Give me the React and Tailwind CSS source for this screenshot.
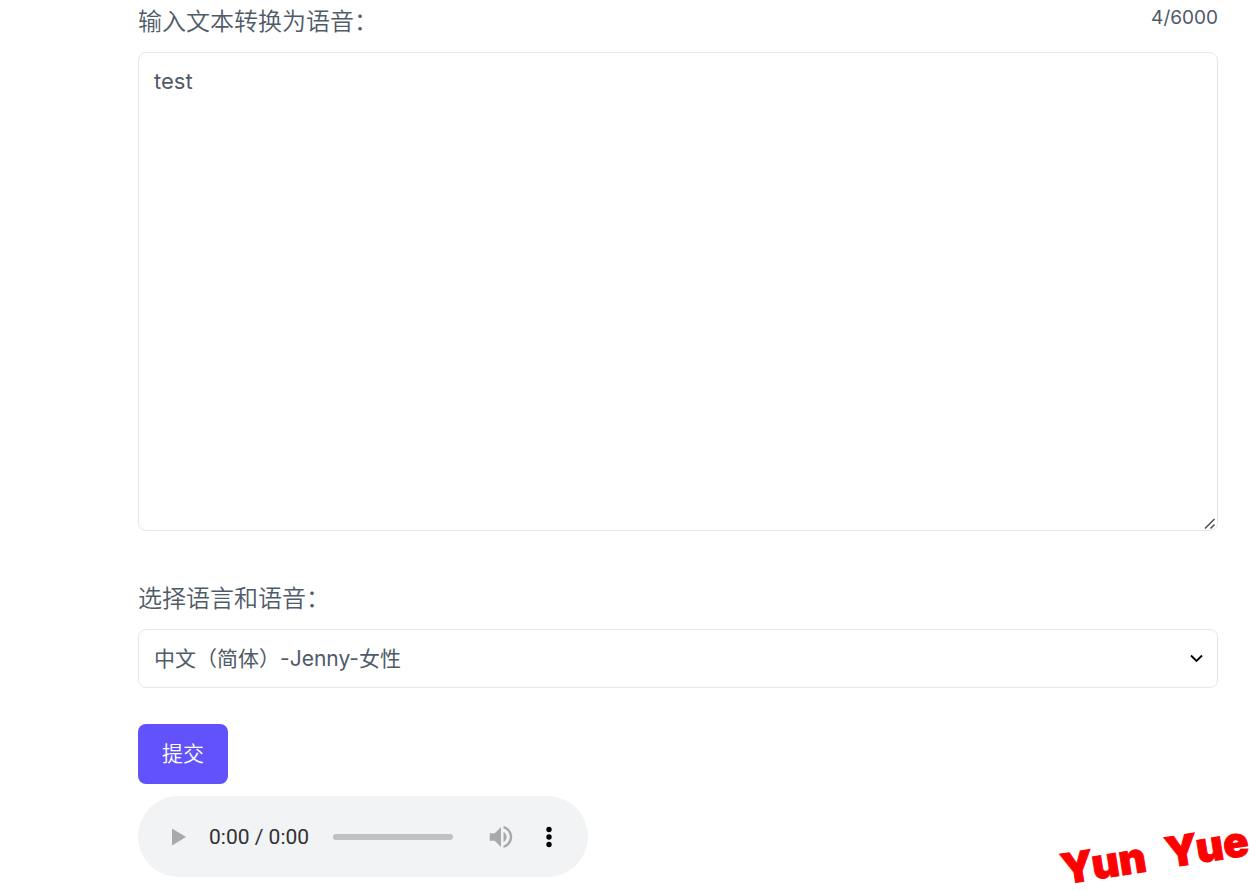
import { useState } from "react";

const LIMIT = 6000;

function AudioPlayer() {
  return (
    <div
      role="group"
      aria-label="音频播放器"
      className="mt-3 flex h-[81px] w-[450px] max-w-full items-center rounded-full bg-[#f1f3f4] pl-[25px] pr-6"
    >
      <button type="button" aria-label="播放" className="flex size-8 shrink-0 items-center justify-center">
        <svg viewBox="0 0 32 32" className="size-8" fill="#a8a9aa" aria-hidden="true">
          <path d="M9 7.500v17l14-8.500z" />
        </svg>
      </button>
      <span className="ml-[14px] shrink-0 whitespace-nowrap font-['Roboto',sans-serif] text-[21px] leading-6 text-[#303132]">
        0:00 / 0:00
      </span>
      <div className="ml-6 mr-[33px] h-[6px] min-w-0 flex-1 rounded-full bg-[#c0c1c2]" />
      <button type="button" aria-label="静音" className="flex size-[30px] shrink-0 items-center justify-center">
        <svg viewBox="0 0 24 24" className="size-[30px] shrink-0" fill="#a8a9aa" aria-hidden="true">
          <path d="M3 9v6h4l5 5V4L7 9H3zm13.500 3c0-1.770-1.020-3.290-2.500-4.030v8.050c1.480-.73 2.500-2.250 2.500-4.020zM14 3.230v2.060c2.890.86 5 3.540 5 6.710s-2.110 5.850-5 6.710v2.060c4.010-.91 7-4.490 7-8.770s-2.990-7.860-7-8.770z" />
        </svg>
      </button>
      <button type="button" aria-label="更多选项" className="ml-[18px] flex size-[30px] shrink-0 items-center justify-center">
        <svg viewBox="0 0 30 30" className="size-[30px]" fill="#000" aria-hidden="true">
          <circle cx="15" cy="7.500" r="2.700" />
          <circle cx="15" cy="15" r="2.700" />
          <circle cx="15" cy="22.500" r="2.700" />
        </svg>
      </button>
    </div>
  );
}

export default function App() {
  const [text, setText] = useState("test");

  return (
    <main className="relative min-h-screen overflow-hidden bg-white pl-[138px] pr-[39px] font-['Inter','Noto_Sans_CJK_SC',sans-serif] text-[#505a69]">
      <form onSubmit={(e) => e.preventDefault()}>
        <div className="flex h-[52px] items-start justify-between">
          <label htmlFor="source" className="pt-1 text-2xl leading-9 font-[350]">
            输入文本转换为语音：
          </label>
          <span className="pt-1 text-[19px] leading-7 font-[390]">
            {text.length}/{LIMIT}
          </span>
        </div>
        <div className="relative">
          <textarea
            id="source"
            value={text}
            maxLength={LIMIT}
            onChange={(e) => setText(e.target.value)}
            className="block h-[479px] w-full resize-none rounded-lg border border-[#e5e7eb] px-[15px] py-3 text-[22px] leading-8 font-[390] outline-none"
          />
          <svg
            viewBox="0 0 12 12"
            className="pointer-events-none absolute right-[2px] bottom-[1px] size-3"
            stroke="#4a4a4a"
            strokeWidth="1.500"
            aria-hidden="true"
          >
            <path d="M1 10.500L10.500 1M6.500 10.500L10.500 6.500" />
          </svg>
        </div>

        <label htmlFor="voice" className="mt-[50px] block pb-3 text-2xl leading-9 font-[350]">
          选择语言和语音：
        </label>
        <div className="relative">
          <select
            id="voice"
            className="block h-[59px] w-full appearance-none rounded-lg border border-[#e5e7eb] bg-white px-[15px] text-[21px] leading-8 font-[390] outline-none"
          >
            <option>中文（简体）-Jenny-女性</option>
          </select>
          <svg
            viewBox="0 0 14 14"
            className="pointer-events-none absolute right-[14px] top-[22px] size-[14px]"
            fill="none"
            stroke="#000"
            strokeWidth="1.800"
            aria-hidden="true"
          >
            <path d="M1 4.500l5.500 5.500L12 4.500" />
          </svg>
        </div>

        <button type="submit" className="mt-9 block h-[60px] rounded-lg bg-[#6152fb] px-6 text-[21px] leading-8 font-[350] text-white">
          提交
        </button>
      </form>

      <AudioPlayer />

      <div className="pointer-events-none absolute right-2 bottom-4 flex -rotate-9 gap-5 text-[42px] leading-10 font-black text-[#ff0000] [-webkit-text-stroke:1px_#ff0000]">
        <span>Yun</span>
        <span>Yue</span>
      </div>
    </main>
  );
}
